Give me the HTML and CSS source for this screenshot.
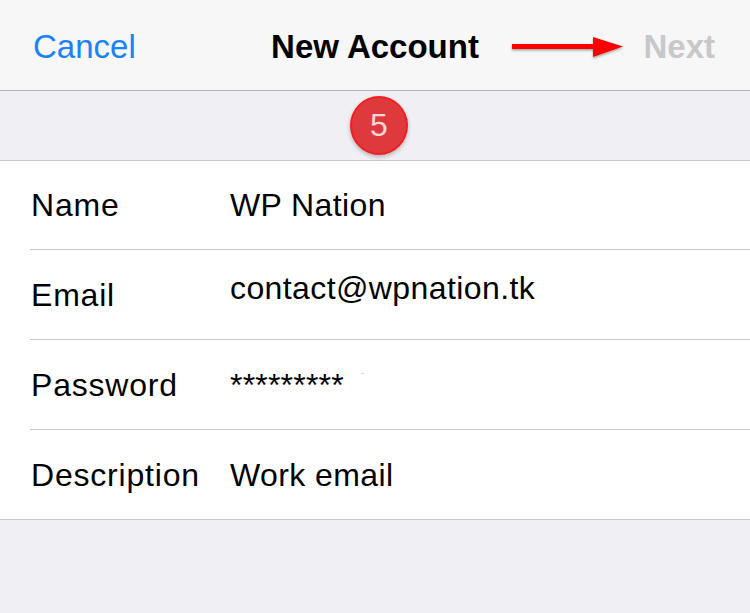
FILE: index.html
```html
<!DOCTYPE html>
<html lang="en">
<head>
<meta charset="utf-8">
<title>New Account</title>
<link rel="stylesheet" href="styles.css">
</head>
<body>
<header class="nav">
  <span class="nav-cancel">Cancel</span>
  <span class="nav-title">New Account</span>
  <span class="nav-next">Next</span>
  <svg class="nav-arrow" width="130" height="34" viewBox="0 0 130 34" aria-hidden="true">
    <defs>
      <filter id="sh" x="-10%" y="-30%" width="120%" height="180%">
        <feDropShadow dx="0" dy="1.5" stdDeviation="1.2" flood-color="#000" flood-opacity="0.35"/>
      </filter>
    </defs>
    <g filter="url(#sh)" fill="#ff0000">
      <rect x="6" y="14" width="82" height="5"/>
      <polygon points="87,7 117,16.5 87,27"/>
    </g>
  </svg>
</header>
<div class="band">
  <div class="badge">5</div>
</div>
<section class="form">
  <div class="row">
    <span class="label">Name</span>
    <span class="value">WP Nation</span>
  </div>
  <div class="row">
    <span class="label">Email</span>
    <span class="value value-raised">contact@wpnation.tk</span>
  </div>
  <div class="row">
    <span class="label">Password</span>
    <span class="value value-secret">*********<span class="caret-mark"></span></span>
  </div>
  <div class="row">
    <span class="label">Description</span>
    <span class="value">Work email</span>
  </div>
</section>
</body>
</html>
```
FILE: styles.css
```css
* {
  box-sizing: border-box;
}

html, body {
  margin: 0;
  padding: 0;
}

body {
  background: #efeff4;
  font-family: "Liberation Sans", Arial, sans-serif;
  color: #000;
  min-height: 613px;
}

.nav {
  position: relative;
  height: 91px;
  background: #f7f7f8;
  border-bottom: 1px solid #b4b4b8;
  display: grid;
  grid-template-columns: 1fr auto 1fr;
  align-items: start;
  padding: 3px 35px 0 33px;
  line-height: 87px;
  font-size: 33px;
}

.nav-cancel {
  justify-self: start;
  color: #1a82fb;
}

.nav-title {
  font-weight: bold;
  color: #000;
  padding-left: 2px;
}

.nav-next {
  justify-self: end;
  font-weight: bold;
  color: #c8c8cb;
}

.nav-arrow {
  position: absolute;
  left: 506px;
  top: 30px;
}

.band {
  height: 70px;
  border-bottom: 1px solid #c8c7cc;
  display: flex;
  align-items: center;
  justify-content: center;
  padding-left: 8px;
}

.badge {
  width: 58px;
  height: 59px;
  border-radius: 50%;
  background: #de3a3d;
  border: 2px solid #f51d22;
  box-shadow: 0 2px 4px rgba(0, 0, 0, 0.25);
  color: #f9d6d6;
  font-size: 32px;
  line-height: 55px;
  text-align: center;
}

.form {
  background: #fff;
  border-bottom: 1px solid #c8c7cc;
}

.row {
  margin-left: 30px;
  height: 90px;
  border-bottom: 1px solid #c8c7cc;
  display: grid;
  grid-template-columns: 200px 1fr;
  align-items: center;
  font-size: 32px;
  line-height: 40px;
}

.row:first-child {
  height: 89px;
}

.row:last-child {
  border-bottom: none;
  height: 89px;
}

.label {
  padding-left: 1px;
  letter-spacing: 0.8px;
}

.value {
  letter-spacing: 0.4px;
}

.value-raised {
  margin-bottom: 13px;
}

.value-secret {
  display: flex;
  align-items: center;
  letter-spacing: 0.2px;
}

.caret-mark {
  display: inline-block;
  width: 3px;
  height: 1px;
  background: #d8d8d8;
  margin-left: 17px;
  margin-bottom: 22px;
}
```
